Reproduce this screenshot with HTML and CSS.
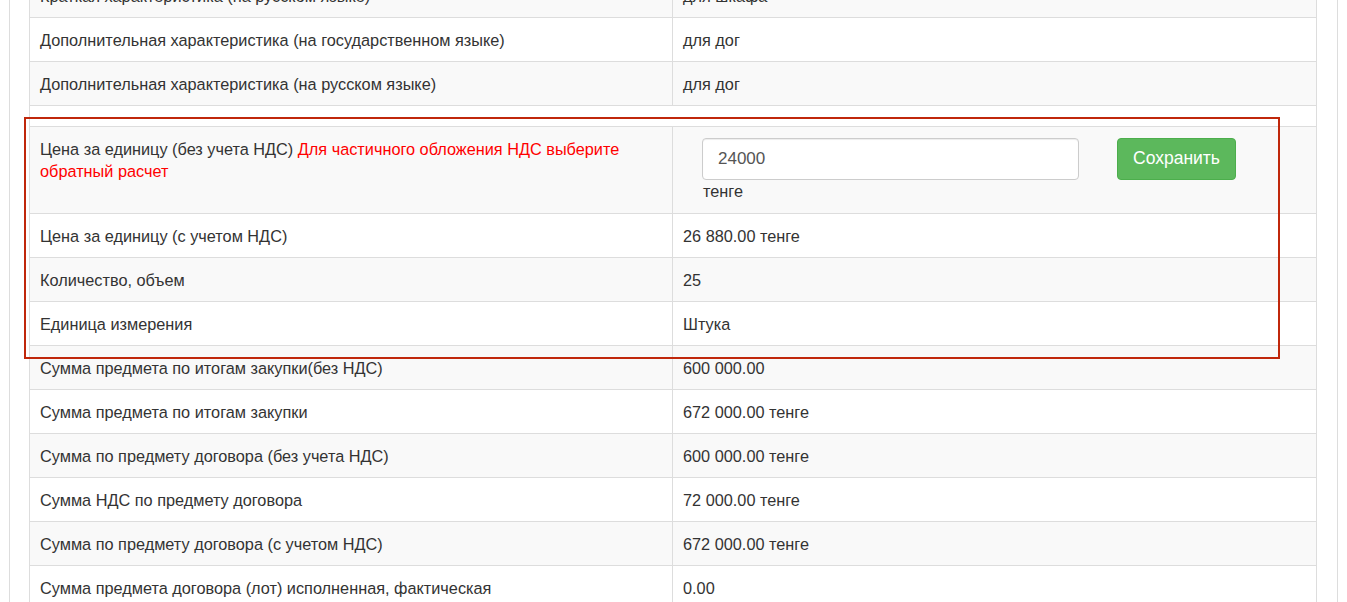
FILE: index.html
```html
<!DOCTYPE html>
<html>
<head>
	<meta charset="utf-8">
	<title>Предмет договора</title>
	<link rel="stylesheet" href="styles.css">
</head>
<body>
	<div class="panel">
		<div class="sheet">
			<table class="info">
				<tr>
					<td>Краткая характеристика (на русском языке)</td>
					<td>для шкафа</td>
				</tr>
				<tr>
					<td>Дополнительная характеристика (на государственном языке)</td>
					<td>для дог</td>
				</tr>
				<tr>
					<td>Дополнительная характеристика (на русском языке)</td>
					<td>для дог</td>
				</tr>
			</table>

			<table class="info">
				<tr>
					<td>Цена за единицу (без учета НДС) <span class="warn">Для частичного обложения НДС выберите обратный расчет</span></td>
					<td>
						<div class="price_form">
							<div class="price_field">
								<input type="text" class="price_input" value="24000">
								<div class="unit">тенге</div>
							</div>
							<button class="btn_save">Сохранить</button>
						</div>
					</td>
				</tr>
				<tr>
					<td>Цена за единицу (с учетом НДС)</td>
					<td>26 880.00 тенге</td>
				</tr>
				<tr>
					<td>Количество, объем</td>
					<td>25</td>
				</tr>
				<tr>
					<td>Единица измерения</td>
					<td>Штука</td>
				</tr>
				<tr>
					<td>Сумма предмета по итогам закупки(без НДС)</td>
					<td>600 000.00</td>
				</tr>
				<tr>
					<td>Сумма предмета по итогам закупки</td>
					<td>672 000.00 тенге</td>
				</tr>
				<tr>
					<td>Сумма по предмету договора (без учета НДС)</td>
					<td>600 000.00 тенге</td>
				</tr>
				<tr>
					<td>Сумма НДС по предмету договора</td>
					<td>72 000.00 тенге</td>
				</tr>
				<tr>
					<td>Сумма по предмету договора (с учетом НДС)</td>
					<td>672 000.00 тенге</td>
				</tr>
				<tr>
					<td>Сумма предмета договора (лот) исполненная, фактическая</td>
					<td>0.00</td>
				</tr>
			</table>
		</div>
	</div>

	<!-- annotation frame drawn over the price rows -->
	<div class="highlight"></div>
</body>
</html>
```

FILE: styles.css
```css
* {
	box-sizing: border-box;
}

body {
	margin: 0;
	position: relative;
	background-color: white;
	font-family: "Liberation Sans", Arial, sans-serif;
	font-size: 16.3px;
	color: #333;
	overflow: hidden;
}

.panel {
	margin-left: 9px;
	width: 1329px;
	padding: 0 20px 0 19px;
	border-left: 1px solid #ddd;
	border-right: 1px solid #ddd;
	min-height: 602px;
}

.sheet {
	margin-top: -27px;
	border-left: 1px solid #ddd;
	border-right: 1px solid #ddd;
}

table.info {
	width: 100%;
	table-layout: fixed;
	border-collapse: separate;
	border-spacing: 0;
	margin-bottom: 20px;
}

.info td {
	padding: 10.5px 10px;
	line-height: 22px;
	vertical-align: top;
	border-top: 1px solid #ddd;
}

.info tr:last-child td {
	border-bottom: 1px solid #ddd;
}

.info td:first-child {
	width: 642px;
}

.info td + td {
	border-left: 1px solid #ddd;
}

.info tr:nth-child(odd) td {
	background-color: #f9f9f9;
}

.warn {
	color: #ff0000;
}

.price_form {
	display: flex;
	align-items: flex-start;
	gap: 38px;
	padding-left: 19px;
}

.price_field {
	width: 377px;
}

.price_input {
	display: block;
	width: 100%;
	height: 42px;
	padding: 0 15px;
	font-family: "Liberation Sans", Arial, sans-serif;
	font-size: 17px;
	color: #555;
	background-color: white;
	border: 1px solid #ccc;
	border-radius: 4px;
	box-shadow: inset 0 1px 1px rgba(0,0,0,.075);
}

.unit {
	line-height: 23px;
	padding-left: 1px;
}

.btn_save {
	width: 119px;
	height: 42px;
	font-family: "Liberation Sans", Arial, sans-serif;
	font-size: 17.5px;
	color: white;
	background-color: #5cb85c;
	border: 1px solid #4cae4c;
	border-radius: 4px;
	cursor: pointer;
}

.highlight {
	position: absolute;
	left: 24px;
	top: 117px;
	width: 1256px;
	height: 242px;
	border: 2px solid #c0270b;
	pointer-events: none;
}
```
